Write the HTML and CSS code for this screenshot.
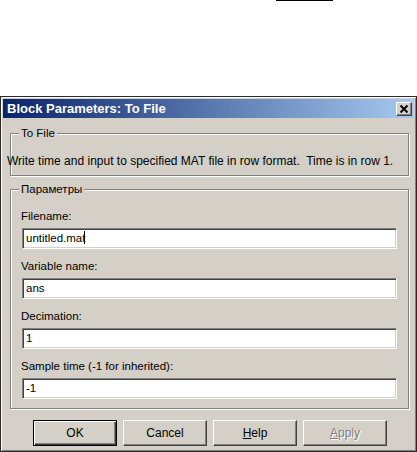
FILE: index.html
```
<!DOCTYPE html>
<html lang="en">
<head>
    <meta charset="UTF-8">
    <meta name="viewport" content="width=device-width, initial-scale=1.0">
    <title>Block Parameters: To File</title>
    <link rel="stylesheet" href="styles.css">
</head>
<body>
    <div class="top-line"></div>

    <div class="dialog">
        <div class="titlebar">
            <span class="title">Block Parameters: To File</span>
            <div class="close-btn">
                <svg width="14" height="12" viewBox="0 0 14 12">
                    <path d="M3.5 2.5 L10.5 9.5 M10.5 2.5 L3.5 9.5" stroke="#000" stroke-width="1.8" fill="none"/>
                </svg>
            </div>
        </div>

        <div class="group group-desc">
            <span class="legend">To File</span>
            <p class="desc">Write time and input to specified MAT file in row format.&nbsp; Time is in row 1.</p>
        </div>

        <div class="group group-params">
            <span class="legend">Параметры</span>
            <div class="field">
                <label>Filename:</label>
                <div class="edit">untitled.mat<span class="caret"></span></div>
            </div>
            <div class="field">
                <label>Variable name:</label>
                <div class="edit">ans</div>
            </div>
            <div class="field">
                <label>Decimation:</label>
                <div class="edit">1</div>
            </div>
            <div class="field">
                <label>Sample time (-1 for inherited):</label>
                <div class="edit">-1</div>
            </div>
        </div>

        <div class="buttons">
            <button class="btn btn-default">OK</button>
            <button class="btn">Cancel</button>
            <button class="btn"><u>H</u>elp</button>
            <button class="btn btn-disabled"><u>A</u>pply</button>
        </div>
    </div>
</body>
</html>
```

FILE: styles.css
```
/* Basic Resets */
* {
    margin: 0;
    padding: 0;
    box-sizing: border-box;
}

body {
    font-family: 'Liberation Sans', Arial, sans-serif;
    font-size: 11.5px;
    background: #fff;
    color: #000;
    width: 417px;
}

.top-line {
    width: 57px;
    height: 1px;
    margin-left: 276px;
    background: #000;
}

/* Window frame */
.dialog {
    margin-top: 95px;
    height: 356px;
    padding: 2px;
    background: #d4d0c8;
    border: 1px solid #2a2a2a;
    box-shadow: inset 1px 1px 0 #fff, inset -1px -1px 0 #808080;
}

.titlebar {
    height: 19px;
    display: flex;
    align-items: center;
    justify-content: space-between;
    padding: 0 2px 0 4px;
    background: linear-gradient(90deg, #0a246a, #a6caf0);
}

.title {
    color: #fff;
    font-weight: bold;
    font-size: 13px;
}

.close-btn {
    width: 16px;
    height: 14px;
    background: #d4d0c8;
    border: 1px solid;
    border-color: #fff #404040 #404040 #fff;
    box-shadow: inset -1px -1px 0 #808080;
    display: flex;
    align-items: center;
    justify-content: center;
}

/* Group boxes */
.group {
    margin: 0 5px 0 7px;
    padding: 0 11px;
    border: 1px solid #808080;
    box-shadow: inset 1px 1px 0 #fff, 1px 1px 0 #fff;
}

.group-desc {
    margin-top: 15px;
    height: 43px;
}

.group-params {
    margin-top: 13px;
    padding-bottom: 9px;
}

.legend {
    display: inline-block;
    margin: -8px 0 0 -3px;
    padding: 0 2px;
    height: 14px;
    line-height: 14px;
    background: #d4d0c8;
    vertical-align: top;
}

.desc {
    margin: 8px 0 0 -15px;
    font-size: 12px;
    line-height: 14px;
    white-space: nowrap;
}

.field label {
    display: block;
    height: 13px;
    line-height: 13px;
    margin: 0 0 5px -1px;
}

.field {
    margin-top: 11px;
}

.field:first-of-type {
    margin-top: 8px;
}

.edit {
    height: 21px;
    padding: 0 3px;
    line-height: 19px;
    background: #fff;
    border: 1px solid;
    border-color: #808080 #fff #fff #808080;
    box-shadow: inset 1px 1px 0 #404040, inset -1px -1px 0 #d4d0c8;
}

.caret {
    display: inline-block;
    width: 1px;
    height: 13px;
    margin-left: -1px;
    background: #000;
    vertical-align: -2px;
}

/* Buttons */
.buttons {
    display: flex;
    gap: 6px;
    margin: 11px 0 0 30px;
}

.btn {
    width: 84px;
    height: 26px;
    font-family: inherit;
    font-size: 12px;
    color: #000;
    background: #d4d0c8;
    border: 1px solid;
    border-color: #fff #404040 #404040 #fff;
    box-shadow: inset -1px -1px 0 #808080;
}

.btn-default {
    border-color: #000;
    box-shadow: inset 1px 1px 0 #fff, inset -1px -1px 0 #404040, inset -2px -2px 0 #808080;
}

.btn-disabled {
    color: #808080;
    text-shadow: 1px 1px 0 #fff;
}
```
